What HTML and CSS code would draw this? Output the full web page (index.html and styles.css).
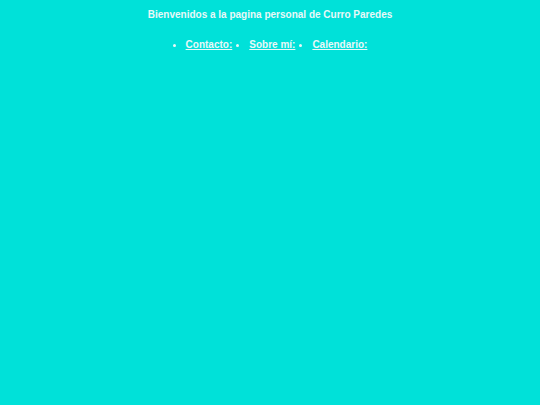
FILE: index.html
```html
<!DOCTYPE html>
<html lang="es">
<head>
<meta charset="utf-8">
<title>Curro Paredes</title>
<link rel="stylesheet" href="styles.css">
</head>
<body>
<header class="top">
<p class="title">Bienvenidos a la pagina personal de Curro Paredes</p>
<ul class="nav">
<li><a href="#">Contacto:</a></li>
<li><a href="#">Sobre mí:</a></li>
<li><a href="#">Calendario:</a></li>
</ul>
</header>
</body>
</html>
```
FILE: styles.css
```css
html, body {
  margin: 0;
  padding: 0;
  background: #00e1d9;
}
body {
  font-family: "Liberation Sans", Arial, sans-serif;
  font-size: 10px;
  font-weight: bold;
  color: #e8f8f8;
}
.top {
  padding-top: 8px;
  text-align: center;
}
.title {
  margin: 0;
  line-height: 13px;
}
.nav {
  margin: 17px 0 0 0;
  padding: 0;
  display: flex;
  justify-content: center;
  line-height: 13px;
}
.nav li {
  margin: 0 2px 0 15px;
}
.nav li::marker {
  font-size: 11px;
}
.nav a {
  color: #e8f8f8;
}
```
